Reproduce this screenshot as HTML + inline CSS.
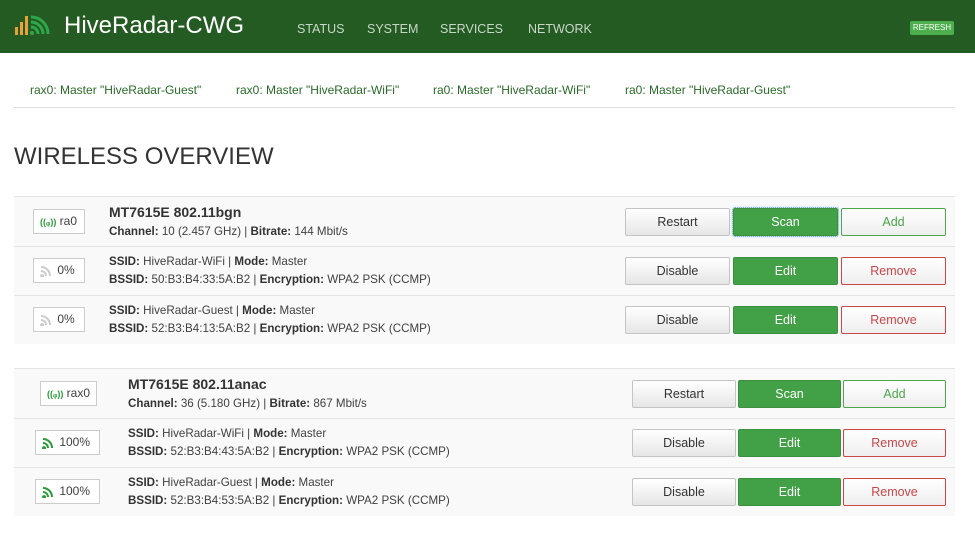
<!DOCTYPE html>
<html><head><meta charset="utf-8"><style>
*{box-sizing:border-box;margin:0;padding:0}
body{width:975px;height:545px;background:#fff;font-family:"Liberation Sans",sans-serif;font-size:12px;color:#404040;position:relative;overflow:hidden}
.hdr{position:absolute;left:0;top:0;width:975px;height:53px;background:#235b22}
.brand{position:absolute;left:64px;top:12px;font-size:24px;color:#fff}
.nav{position:absolute;top:22px;font-size:12.5px;color:#c8d8c8}
.refresh{position:absolute;left:910px;top:21px;width:44px;height:14px;background:#4cae4c;color:#fff;font-size:8px;text-align:center;line-height:14px;border-radius:2px}
.tab{position:absolute;top:83px;color:#2a6a2a;font-size:12px}
.line{position:absolute;left:14px;width:941px;height:1px;background:#ddd}
h2{position:absolute;left:14px;top:143px;font-size:24px;font-weight:normal;color:#333}
.row{position:absolute;left:14px;width:941px;background:#f9f9f9;border-top:1px solid #e5e5e5}
.badge{position:absolute;height:25px;border:1px solid #ccc;background:#fff;font-size:12px;line-height:23px;padding-left:6px;color:#404040}
.t{position:absolute;font-size:11.6px;line-height:18px;color:#404040;top:0}
.t b{color:#333}
.title{font-size:14px;font-weight:bold;color:#333}
.btn{position:absolute;height:28px;font-size:12.5px;text-align:center;line-height:26px;border-radius:2px}
.g{background:linear-gradient(#fff,#e6e6e6);border:1px solid #c4c4c4;color:#333}
.s{background:#42a047;border:1px solid #3b9040;color:#fff}
.a{background:linear-gradient(#fff,#eee);border:1px solid #4ca64c;color:#4ca64c}
.r{background:linear-gradient(#fff,#eee);border:1px solid #c9464a;color:#c9464a}
svg{vertical-align:middle}
</style></head><body>
<div class="hdr">
<svg style="position:absolute;left:14px;top:13px" width="42" height="24" viewBox="0 0 42 24">
<rect x="1" y="14" width="3" height="8" fill="#e8a23a"/><rect x="6" y="9" width="3" height="13" fill="#e8a23a"/><rect x="11" y="3" width="3" height="19" fill="#e8a23a"/>
<circle cx="18" cy="20" r="2" fill="#2ea84a"/>
<path d="M17 14a7 7 0 0 1 7 7M17 9a12 12 0 0 1 12 12M17 4a17 17 0 0 1 17 17" stroke="#2ea84a" stroke-width="3" fill="none"/></svg>
<div class="brand">HiveRadar-CWG</div>
<div class="nav" style="left:297px">STATUS</div>
<div class="nav" style="left:367px">SYSTEM</div>
<div class="nav" style="left:440px">SERVICES</div>
<div class="nav" style="left:528px">NETWORK</div>
<div class="refresh">REFRESH</div>
</div>
<div class="tab" style="left:30px">rax0: Master "HiveRadar-Guest"</div>
<div class="tab" style="left:236px">rax0: Master "HiveRadar-WiFi"</div>
<div class="tab" style="left:433px">ra0: Master "HiveRadar-WiFi"</div>
<div class="tab" style="left:625px">ra0: Master "HiveRadar-Guest"</div>
<div class="line" style="top:107px"></div>
<h2>WIRELESS OVERVIEW</h2>

<div class="row" style="top:196px;height:50px"></div>
<div class="row" style="top:246px;height:49px"></div>
<div class="row" style="top:295px;height:49px"></div>
<div class="row" style="top:368px;height:50px"></div>
<div class="row" style="top:418px;height:49px"></div>
<div class="row" style="top:467px;height:49px"></div>

<div class="badge" style="left:33px;top:209px;width:52px"><span style="color:#2a9a3a;font-size:9px;font-weight:bold">((ᵩ))</span> ra0</div>
<div class="t" style="left:109px;top:203px"><span class="title">MT7615E 802.11bgn</span><br><b>Channel:</b> 10 (2.457 GHz) | <b>Bitrate:</b> 144 Mbit/s</div>
<div class="badge" style="left:33px;top:258px;width:52px"><svg width="14" height="12"><path d="M2 10a1 1 0 1 0 .1 0M1 6a5 5 0 0 1 5 5M1 2a9 9 0 0 1 9 9" stroke="#ccc" stroke-width="2" fill="none"/></svg> 0%</div>
<div class="t" style="left:109px;top:253px"><b>SSID:</b> HiveRadar-WiFi | <b>Mode:</b> Master<br><b>BSSID:</b> 50:B3:B4:33:5A:B2 | <b>Encryption:</b> WPA2 PSK (CCMP)</div>
<div class="badge" style="left:33px;top:307px;width:52px"><svg width="14" height="12"><path d="M2 10a1 1 0 1 0 .1 0M1 6a5 5 0 0 1 5 5M1 2a9 9 0 0 1 9 9" stroke="#ccc" stroke-width="2" fill="none"/></svg> 0%</div>
<div class="t" style="left:109px;top:302px"><b>SSID:</b> HiveRadar-Guest | <b>Mode:</b> Master<br><b>BSSID:</b> 52:B3:B4:13:5A:B2 | <b>Encryption:</b> WPA2 PSK (CCMP)</div>

<div class="btn g" style="left:625px;top:208px;width:105px">Restart</div>
<div class="btn s" style="left:733px;top:208px;width:105px;outline:1px dotted #7ab;box-shadow:0 0 3px #9cf">Scan</div>
<div class="btn a" style="left:841px;top:208px;width:105px">Add</div>
<div class="btn g" style="left:625px;top:257px;width:105px">Disable</div>
<div class="btn s" style="left:733px;top:257px;width:105px">Edit</div>
<div class="btn r" style="left:841px;top:257px;width:105px">Remove</div>
<div class="btn g" style="left:625px;top:306px;width:105px">Disable</div>
<div class="btn s" style="left:733px;top:306px;width:105px">Edit</div>
<div class="btn r" style="left:841px;top:306px;width:105px">Remove</div>

<div class="badge" style="left:40px;top:381px;width:57px"><span style="color:#2a9a3a;font-size:9px;font-weight:bold">((ᵩ))</span> rax0</div>
<div class="t" style="left:128px;top:375px"><span class="title">MT7615E 802.11anac</span><br><b>Channel:</b> 36 (5.180 GHz) | <b>Bitrate:</b> 867 Mbit/s</div>
<div class="badge" style="left:35px;top:430px;width:65px"><svg width="14" height="12"><path d="M2 10a1 1 0 1 0 .1 0M1 6a5 5 0 0 1 5 5M1 2a9 9 0 0 1 9 9" stroke="#2a9a3a" stroke-width="2" fill="none"/></svg> 100%</div>
<div class="t" style="left:128px;top:425px"><b>SSID:</b> HiveRadar-WiFi | <b>Mode:</b> Master<br><b>BSSID:</b> 52:B3:B4:43:5A:B2 | <b>Encryption:</b> WPA2 PSK (CCMP)</div>
<div class="badge" style="left:35px;top:479px;width:65px"><svg width="14" height="12"><path d="M2 10a1 1 0 1 0 .1 0M1 6a5 5 0 0 1 5 5M1 2a9 9 0 0 1 9 9" stroke="#2a9a3a" stroke-width="2" fill="none"/></svg> 100%</div>
<div class="t" style="left:128px;top:474px"><b>SSID:</b> HiveRadar-Guest | <b>Mode:</b> Master<br><b>BSSID:</b> 52:B3:B4:53:5A:B2 | <b>Encryption:</b> WPA2 PSK (CCMP)</div>

<div class="btn g" style="left:632px;top:380px;width:104px">Restart</div>
<div class="btn s" style="left:738px;top:380px;width:103px">Scan</div>
<div class="btn a" style="left:843px;top:380px;width:103px">Add</div>
<div class="btn g" style="left:632px;top:429px;width:104px">Disable</div>
<div class="btn s" style="left:738px;top:429px;width:103px">Edit</div>
<div class="btn r" style="left:843px;top:429px;width:103px">Remove</div>
<div class="btn g" style="left:632px;top:478px;width:104px">Disable</div>
<div class="btn s" style="left:738px;top:478px;width:103px">Edit</div>
<div class="btn r" style="left:843px;top:478px;width:103px">Remove</div>
</body></html>
